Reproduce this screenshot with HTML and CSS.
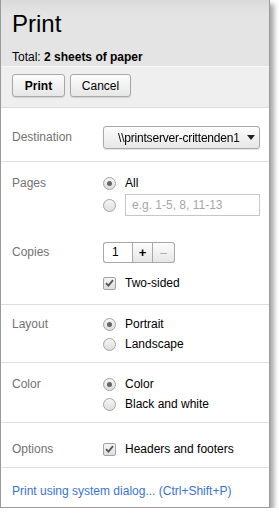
FILE: index.html
```html
<!DOCTYPE html>
<html lang="en">
<head>
    <meta charset="UTF-8">
    <title>Print</title>
    <link rel="stylesheet" href="styles.css">
</head>
<body>

<div class="dialog">
    <div class="header">
        <h1>Print</h1>
        <div class="total">Total: <b>2 sheets of paper</b></div>
    </div>

    <div class="actions">
        <button class="btn btn-print">Print</button>
        <button class="btn btn-cancel">Cancel</button>
    </div>

    <div class="section sec-dest">
        <div class="row">
            <div class="label label-tall">Destination</div>
            <div class="select">
                <span class="select-text">\\printserver-crittenden1</span>
                <span class="arrow"></span>
            </div>
        </div>
    </div>

    <div class="section sec-pages">
        <div class="row">
            <div class="label">Pages</div>
            <div class="opts">
                <div class="opt"><span class="radio checked"></span>All</div>
                <div class="opt opt-input"><span class="radio"></span><span class="range">e.g. 1-5, 8, 11-13</span></div>
            </div>
        </div>
        <div class="row row-copies">
            <div class="label label-copies">Copies</div>
            <div class="opts">
                <div class="stepper">
                    <span class="num">1</span>
                    <span class="step plus">+</span>
                    <span class="step minus">&ndash;</span>
                </div>
                <div class="opt opt-two"><span class="check"><svg width="9" height="8" viewBox="0 0 9 8"><path d="M1 4.2 L3.4 6.6 L8 1.2" fill="none" stroke="#555" stroke-width="1.8"/></svg></span>Two-sided</div>
            </div>
        </div>
    </div>

    <div class="section sec-layout">
        <div class="row">
            <div class="label">Layout</div>
            <div class="opts">
                <div class="opt"><span class="radio checked"></span>Portrait</div>
                <div class="opt"><span class="radio"></span>Landscape</div>
            </div>
        </div>
    </div>

    <div class="section sec-color">
        <div class="row">
            <div class="label">Color</div>
            <div class="opts">
                <div class="opt"><span class="radio checked"></span>Color</div>
                <div class="opt"><span class="radio"></span>Black and white</div>
            </div>
        </div>
    </div>

    <div class="section sec-options">
        <div class="row">
            <div class="label">Options</div>
            <div class="opts">
                <div class="opt"><span class="check"><svg width="9" height="8" viewBox="0 0 9 8"><path d="M1 4.2 L3.4 6.6 L8 1.2" fill="none" stroke="#555" stroke-width="1.8"/></svg></span>Headers and footers</div>
            </div>
        </div>
    </div>

    <div class="system">
        <a href="#">Print using system dialog... (Ctrl+Shift+P)</a>
    </div>
</div>

</body>
</html>
```

FILE: styles.css
```css
body { margin: 0; font-family: "Liberation Sans", Arial, sans-serif; font-size: 12px; color: #000; background: #fff; }

.dialog { width: 270px; height: 508px; box-sizing: border-box; border: 1px solid #9a9a9a; border-top: none; background: #fff; box-shadow: 4px 4px 5px rgba(0, 0, 0, 0.35); }

.header { height: 66px; box-sizing: border-box; padding: 8px 11px 0; background: linear-gradient(#dadada, #e4e4e4 14px); }
.header h1 { margin: 0; font-size: 24px; line-height: 32px; font-weight: normal; }
.total { margin-top: 9px; line-height: 16px; }

.actions { display: flex; gap: 5px; padding: 7px 11px 10px; background: #eeefee; border-top: 1px solid #f7f7f7; border-bottom: 1px solid #dadada; }
.btn { height: 23px; padding: 0; font-family: inherit; font-size: 12px; color: #000; border: 1px solid #a8a8a8; border-radius: 3px; background: linear-gradient(#fdfdfd, #e6e6e6); box-shadow: 0 1px 1px rgba(0, 0, 0, 0.12); }
.btn-print { width: 53px; font-weight: bold; }
.btn-cancel { width: 61px; }

.section { border-bottom: 1px solid #dedede; }
.sec-dest { padding: 18px 0 12px; }
.sec-pages { padding: 11px 0 11px; }
.sec-layout { padding: 9px 0 8px; }
.sec-color { padding: 11px 0 8px; }
.sec-options { padding: 16px 0 8px; }

.row { display: flex; }
.label { width: 91px; padding-left: 11px; line-height: 20px; color: #727272; }
.label-tall { line-height: 23px; }
.row-copies { margin-top: 26px; }
.label-copies { line-height: 21px; }

.opts { display: flex; flex-direction: column; }
.opt { display: flex; align-items: center; height: 20px; }
.opt-input { height: 22px; margin-top: 1px; }
.opt-two { margin-top: 10px; }

.radio { width: 11px; height: 11px; margin-right: 9px; border: 1px solid #a3a3a3; border-radius: 50%; background: linear-gradient(#f6f6f6, #dedede); position: relative; flex: none; }
.radio.checked::after { content: ""; position: absolute; left: 3px; top: 3px; width: 5px; height: 5px; border-radius: 50%; background: #666; }

.check { width: 11px; height: 11px; margin-right: 9px; border: 1px solid #a3a3a3; border-radius: 2px; background: linear-gradient(#f6f6f6, #dedede); display: flex; align-items: center; justify-content: center; flex: none; }

.range { width: 127px; height: 20px; padding-left: 6px; line-height: 20px; border: 1px solid #c6c6c6; color: #a6a6a6; background: #fff; }

.select { width: 155px; height: 21px; display: flex; align-items: center; border: 1px solid #a8a8a8; border-radius: 3px; background: linear-gradient(#fdfdfd, #e6e6e6); box-shadow: 0 1px 1px rgba(0, 0, 0, 0.1); }
.select-text { width: 126px; margin-left: 14px; white-space: nowrap; overflow: hidden; letter-spacing: -0.2px; -webkit-mask-image: linear-gradient(to right, #000 118px, rgba(0, 0, 0, 0.3) 126px); }
.arrow { margin-left: 3px; width: 0; height: 0; border-left: 4px solid transparent; border-right: 4px solid transparent; border-top: 5px solid #222; }

.stepper { display: flex; height: 21px; }
.num { width: 29px; box-sizing: border-box; border: 1px solid #a8a8a8; border-right: none; border-radius: 3px 0 0 3px; background: #fff; line-height: 19px; text-indent: 8px; }
.step { display: flex; align-items: center; justify-content: center; box-sizing: border-box; border: 1px solid #a8a8a8; background: linear-gradient(#fdfdfd, #e6e6e6); }
.plus { width: 21px; font-weight: bold; font-size: 13px; }
.minus { width: 22px; border-left: none; border-radius: 0 3px 3px 0; color: #aaa; }

.system { padding: 13px 11px 0; line-height: 20px; }
.system a { color: #3a73d8; text-decoration: none; }
```
